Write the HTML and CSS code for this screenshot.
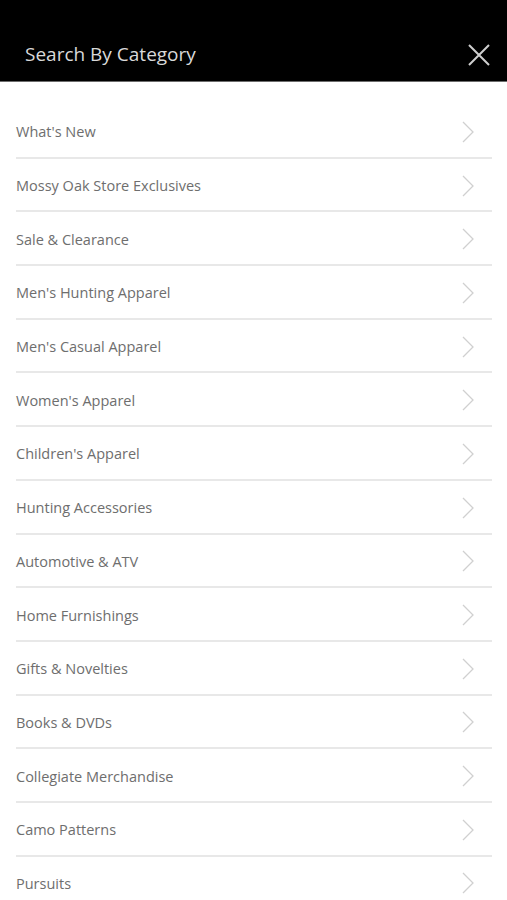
FILE: index.html
```html
<!DOCTYPE html>
<html>

<head>
  <title>Search By Category</title>
  <link rel="stylesheet" href="styles.css">
</head>

<body>
  <div class="header">
    <span class="title">Search By Category</span>
    <svg class="close" width="22" height="22" viewBox="0 0 22 22">
      <path d="M1 1 L21 21 M21 1 L1 21" stroke="#cfcfcf" stroke-width="2" fill="none" />
    </svg>
  </div>

  <ul class="categories">
    <li>What's New</li>
    <li>Mossy Oak Store Exclusives</li>
    <li>Sale &amp; Clearance</li>
    <li>Men's Hunting Apparel</li>
    <li>Men's Casual Apparel</li>
    <li>Women's Apparel</li>
    <li>Children's Apparel</li>
    <li>Hunting Accessories</li>
    <li>Automotive &amp; ATV</li>
    <li>Home Furnishings</li>
    <li>Gifts &amp; Novelties</li>
    <li>Books &amp; DVDs</li>
    <li>Collegiate Merchandise</li>
    <li>Camo Patterns</li>
    <li>Pursuits</li>
  </ul>

  <script>
    // same chevron on every row
    var chevron = '<svg class="chevron" width="12" height="22" viewBox="0 0 12 22">' +
      '<path d="M1 1 L11 11 L1 21" stroke="#d0d0d0" stroke-width="1.3" fill="none" /></svg>';
    var items = document.querySelectorAll(".categories li");
    for (var i = 0; i < items.length; i++) {
      items[i].innerHTML = "<span>" + items[i].innerHTML + "</span>" + chevron;
    }
  </script>
</body>

</html>
```

FILE: styles.css
```css
body {
  margin: 0;
  background: #fff;
  font-family: "Open Sans", "Liberation Sans", sans-serif;
  overflow: hidden;
}
.header {
  background: #000;
  height: 82px;
  box-sizing: border-box;
  padding: 28px 17px 0 25px;
  display: flex;
  align-items: center;
  justify-content: space-between;
  border-bottom: 1px solid #6d6d6d;
}
.header .title {
  color: #d9d9d9;
  font-size: 19px;
  height: 53px;
  line-height: 53px;
}
.categories {
  list-style: none;
  margin: 23px 15px 0 16px;
  padding: 0;
}
.categories li {
  height: 53.7px;
  box-sizing: border-box;
  border-bottom: 2px solid #e8e8e8;
  display: flex;
  align-items: center;
  justify-content: space-between;
  padding-top: 2px;
  padding-right: 18px;
  color: #6e6e6e;
  font-size: 14.5px;
}
.chevron {
  display: block;
}
```
